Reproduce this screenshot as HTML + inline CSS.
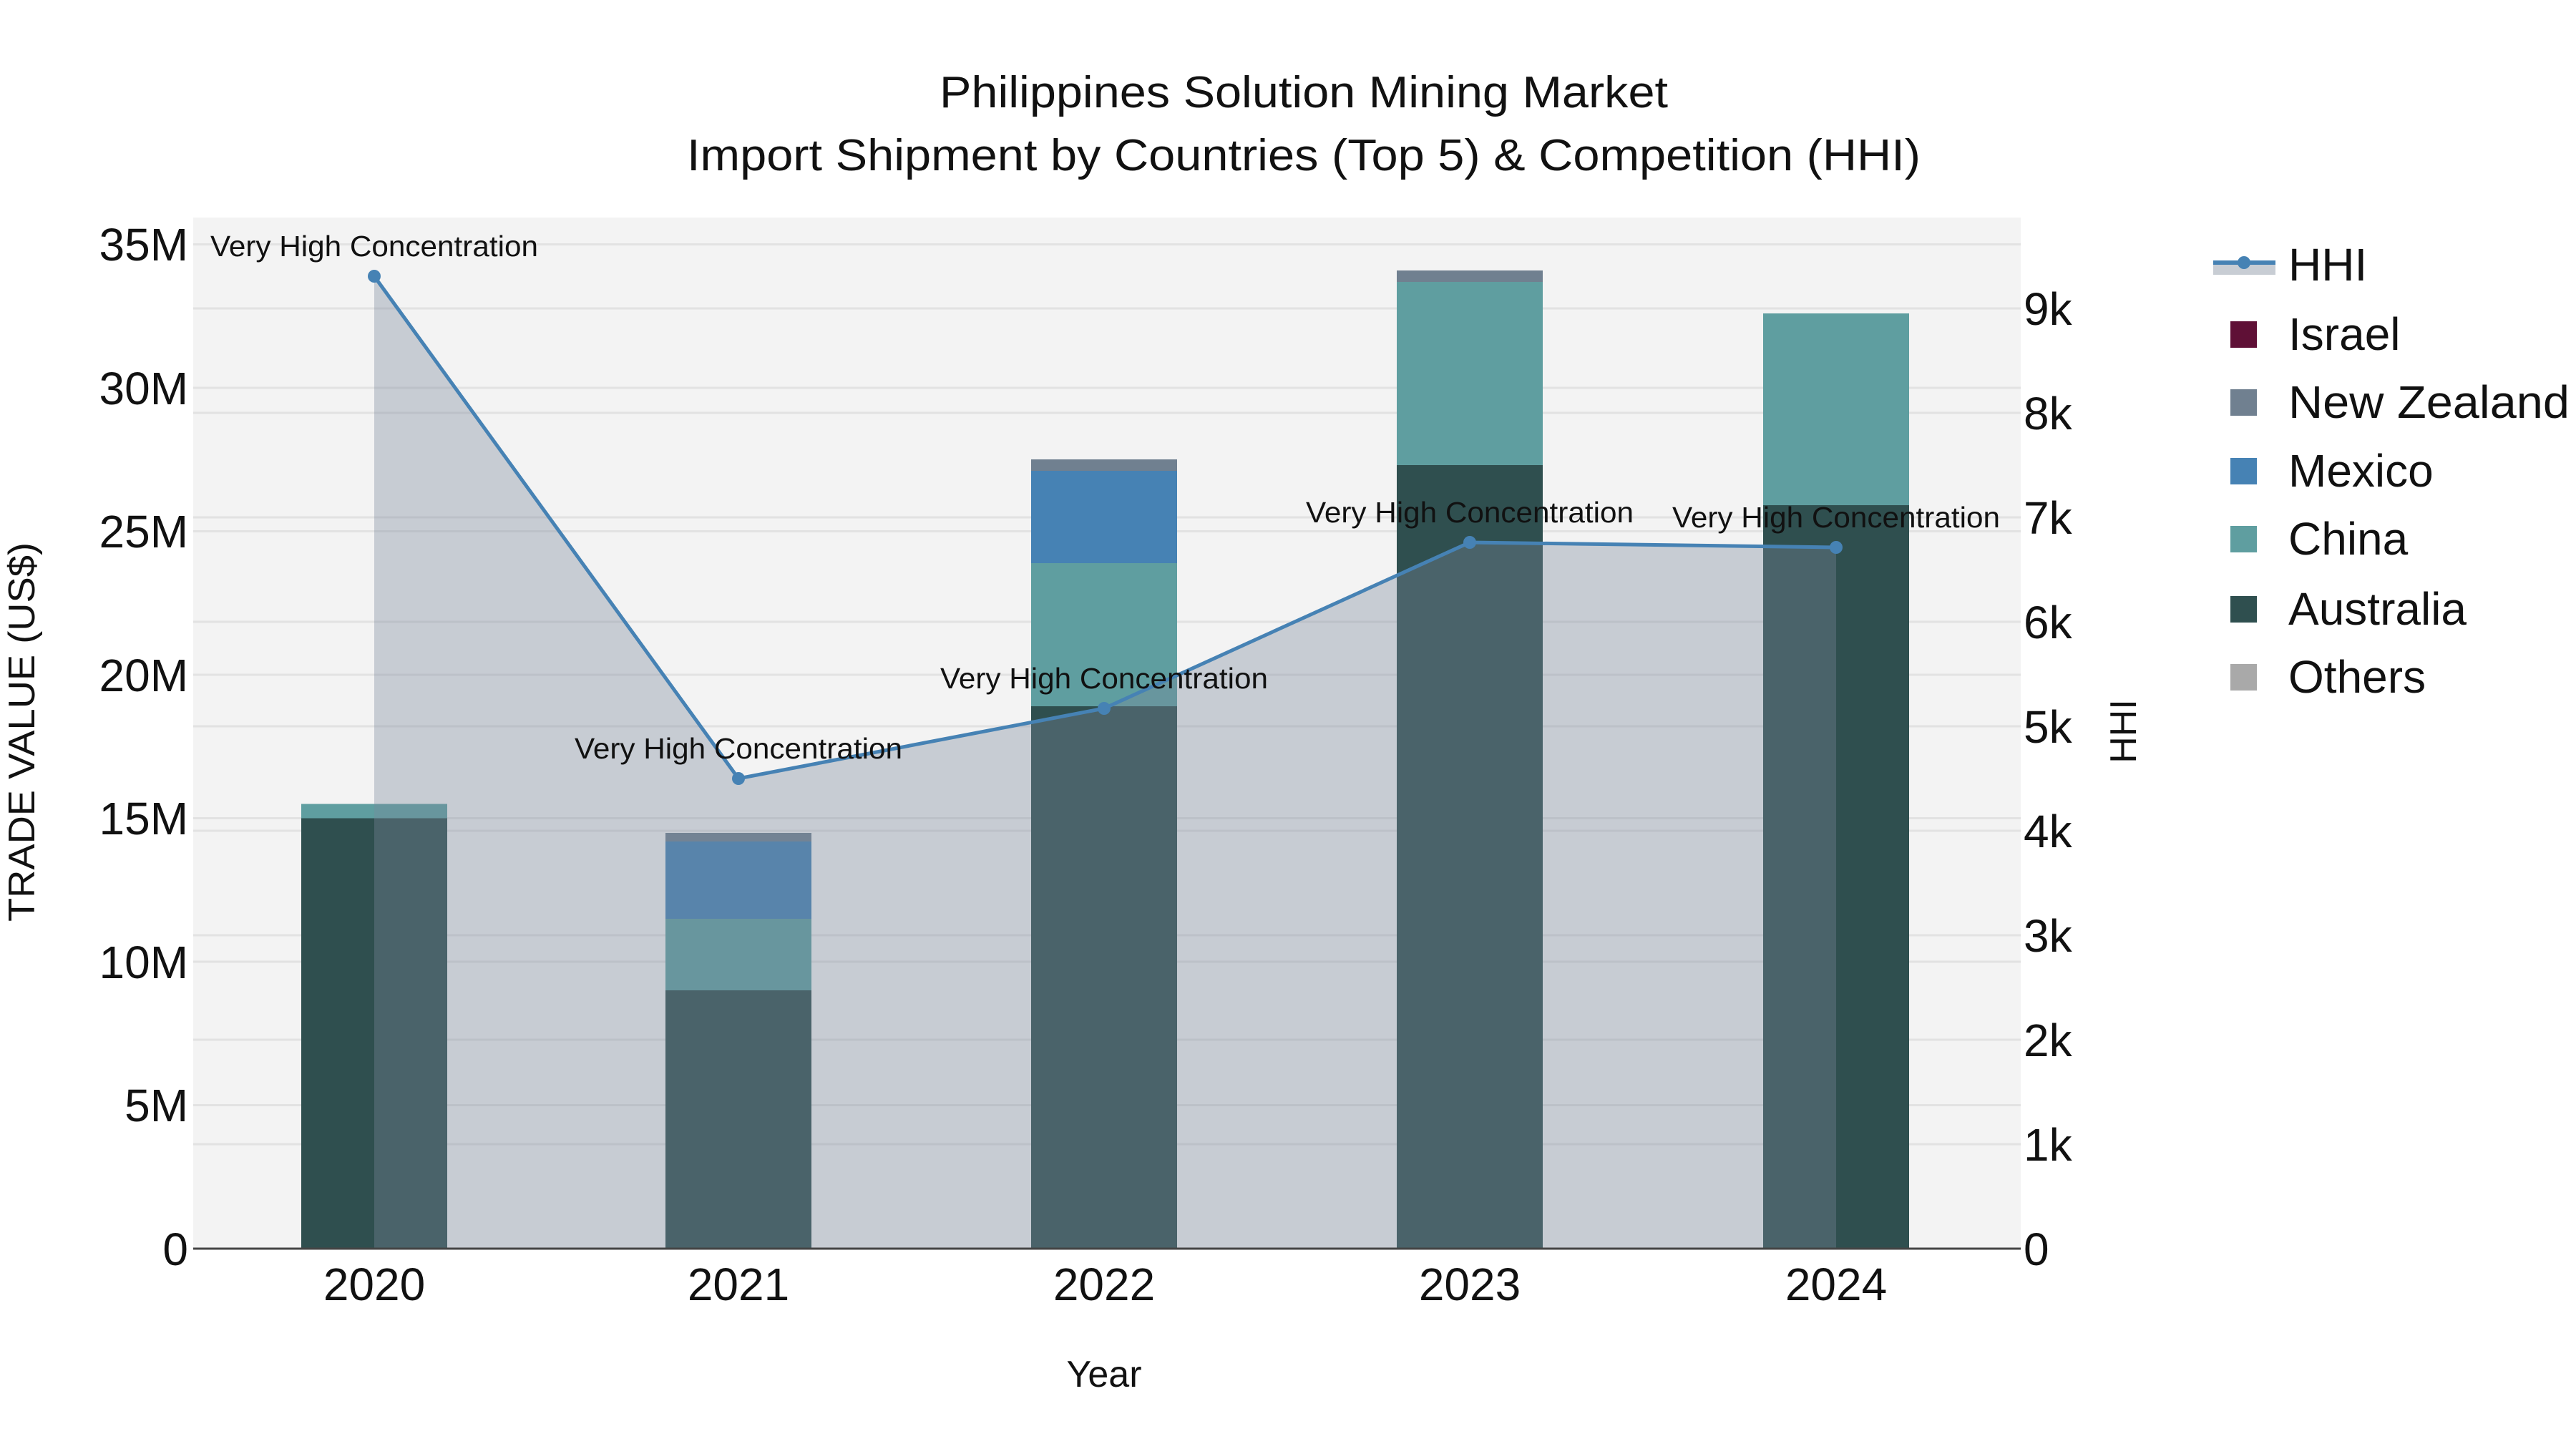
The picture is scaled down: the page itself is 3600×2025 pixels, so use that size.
<!DOCTYPE html>
<html><head><meta charset="utf-8"><style>html,body{margin:0;padding:0;background:#fff}svg{display:block}text{font-family:"Liberation Sans",Arial,sans-serif;fill:#111}</style></head><body>
<svg width="3600" height="2025" viewBox="0 0 3600 2025" xmlns="http://www.w3.org/2000/svg">
<rect width="3600" height="2025" fill="#fff"/>
<text x="1822" y="150" font-size="62" text-anchor="middle" textLength="1018" lengthAdjust="spacingAndGlyphs">Philippines Solution Mining Market</text>
<text x="1822" y="238" font-size="62" text-anchor="middle" textLength="1724" lengthAdjust="spacingAndGlyphs">Import Shipment by Countries (Top 5) &amp; Competition (HHI)</text>
<rect x="270" y="304" width="2554" height="1441" fill="#f3f3f3"/>
<g stroke="#e2e2e2" stroke-width="3">
<line x1="270" x2="2824" y1="1544.5" y2="1544.5"/><line x1="270" x2="2824" y1="1344" y2="1344"/><line x1="270" x2="2824" y1="1143.5" y2="1143.5"/><line x1="270" x2="2824" y1="943" y2="943"/><line x1="270" x2="2824" y1="742.5" y2="742.5"/><line x1="270" x2="2824" y1="542" y2="542"/><line x1="270" x2="2824" y1="341.5" y2="341.5"/>
<line x1="270" x2="2824" y1="1599" y2="1599"/><line x1="270" x2="2824" y1="1453" y2="1453"/><line x1="270" x2="2824" y1="1307" y2="1307"/><line x1="270" x2="2824" y1="1161" y2="1161"/><line x1="270" x2="2824" y1="1015" y2="1015"/><line x1="270" x2="2824" y1="869" y2="869"/><line x1="270" x2="2824" y1="723" y2="723"/><line x1="270" x2="2824" y1="577" y2="577"/><line x1="270" x2="2824" y1="431" y2="431"/>
</g>
<!-- bars -->
<g>
<rect x="421" y="1143.5" width="204" height="601.5" fill="#2f4f4f"/><rect x="421" y="1123.5" width="204" height="20" fill="#5f9ea0"/>
<rect x="930" y="1384" width="204" height="361" fill="#2f4f4f"/><rect x="930" y="1284" width="204" height="100" fill="#5f9ea0"/><rect x="930" y="1176" width="204" height="108" fill="#4682b4"/><rect x="930" y="1164" width="204" height="12" fill="#708090"/>
<rect x="1441" y="987" width="204" height="758" fill="#2f4f4f"/><rect x="1441" y="787" width="204" height="200" fill="#5f9ea0"/><rect x="1441" y="658" width="204" height="129" fill="#4682b4"/><rect x="1441" y="642" width="204" height="16" fill="#708090"/>
<rect x="1952" y="650" width="204" height="1095" fill="#2f4f4f"/><rect x="1952" y="394" width="204" height="256" fill="#5f9ea0"/><rect x="1952" y="378" width="204" height="16" fill="#708090"/>
<rect x="2464" y="706" width="204" height="1039" fill="#2f4f4f"/><rect x="2464" y="438" width="204" height="268" fill="#5f9ea0"/>
</g>
<polygon points="523,1745 523,386 1032,1088 1543,990 2054,758 2566,765 2566,1745" fill="rgb(123,137,156)" fill-opacity="0.36"/>
<polyline points="523,386 1032,1088 1543,990 2054,758 2566,765" fill="none" stroke="#4682b4" stroke-width="5"/>
<g fill="#4682b4"><circle cx="523" cy="386" r="9"/><circle cx="1032" cy="1088" r="9"/><circle cx="1543" cy="990" r="9"/><circle cx="2054" cy="758" r="9"/><circle cx="2566" cy="765" r="9"/></g>
<line x1="270" x2="2824" y1="1745" y2="1745" stroke="#444" stroke-width="3"/>
<g font-size="41" text-anchor="middle">
<text x="523" y="358" textLength="458" lengthAdjust="spacingAndGlyphs">Very High Concentration</text>
<text x="1032" y="1060" textLength="458" lengthAdjust="spacingAndGlyphs">Very High Concentration</text>
<text x="1543" y="962" textLength="458" lengthAdjust="spacingAndGlyphs">Very High Concentration</text>
<text x="2054" y="730" textLength="458" lengthAdjust="spacingAndGlyphs">Very High Concentration</text>
<text x="2566" y="737" textLength="458" lengthAdjust="spacingAndGlyphs">Very High Concentration</text>
</g>
<g font-size="64" text-anchor="end">
<text x="263" y="1768">0</text><text x="263" y="1567">5M</text><text x="263" y="1367">10M</text><text x="263" y="1166">15M</text><text x="263" y="966">20M</text><text x="263" y="765">25M</text><text x="263" y="565">30M</text><text x="263" y="364">35M</text>
</g>
<g font-size="64">
<text x="2828" y="1768">0</text><text x="2828" y="1622">1k</text><text x="2828" y="1476">2k</text><text x="2828" y="1330">3k</text><text x="2828" y="1184">4k</text><text x="2828" y="1038">5k</text><text x="2828" y="892">6k</text><text x="2828" y="746">7k</text><text x="2828" y="600">8k</text><text x="2828" y="454">9k</text>
</g>
<g font-size="64" text-anchor="middle">
<text x="523" y="1817">2020</text><text x="1032" y="1817">2021</text><text x="1543" y="1817">2022</text><text x="2054" y="1817">2023</text><text x="2566" y="1817">2024</text>
</g>
<text x="1543" y="1938" font-size="52" text-anchor="middle">Year</text>
<text transform="translate(48,1023) rotate(-90)" font-size="52" text-anchor="middle" textLength="530" lengthAdjust="spacingAndGlyphs">TRADE VALUE (US$)</text>
<text transform="translate(2985,1022) rotate(-90)" font-size="52" text-anchor="middle">HHI</text>
<!-- legend -->
<rect x="3093" y="370" width="87" height="14" fill="#c8cdd4"/>
<line x1="3093" x2="3180" y1="367" y2="367" stroke="#4682b4" stroke-width="6"/>
<circle cx="3136" cy="367" r="9" fill="#4682b4"/>
<rect x="3117" y="449" width="37" height="37" fill="#5f1036"/>
<rect x="3117" y="544" width="37" height="37" fill="#708090"/>
<rect x="3117" y="640" width="37" height="37" fill="#4682b4"/>
<rect x="3117" y="735" width="37" height="37" fill="#5f9ea0"/>
<rect x="3117" y="833" width="37" height="37" fill="#2f4f4f"/>
<rect x="3117" y="928" width="37" height="37" fill="#a9a9a9"/>
<g font-size="64">
<text x="3198" y="392">HHI</text><text x="3198" y="489">Israel</text><text x="3198" y="584" textLength="393" lengthAdjust="spacingAndGlyphs">New Zealand</text><text x="3198" y="680">Mexico</text><text x="3198" y="775">China</text><text x="3198" y="873">Australia</text><text x="3198" y="968">Others</text>
</g>
</svg>
</body></html>
